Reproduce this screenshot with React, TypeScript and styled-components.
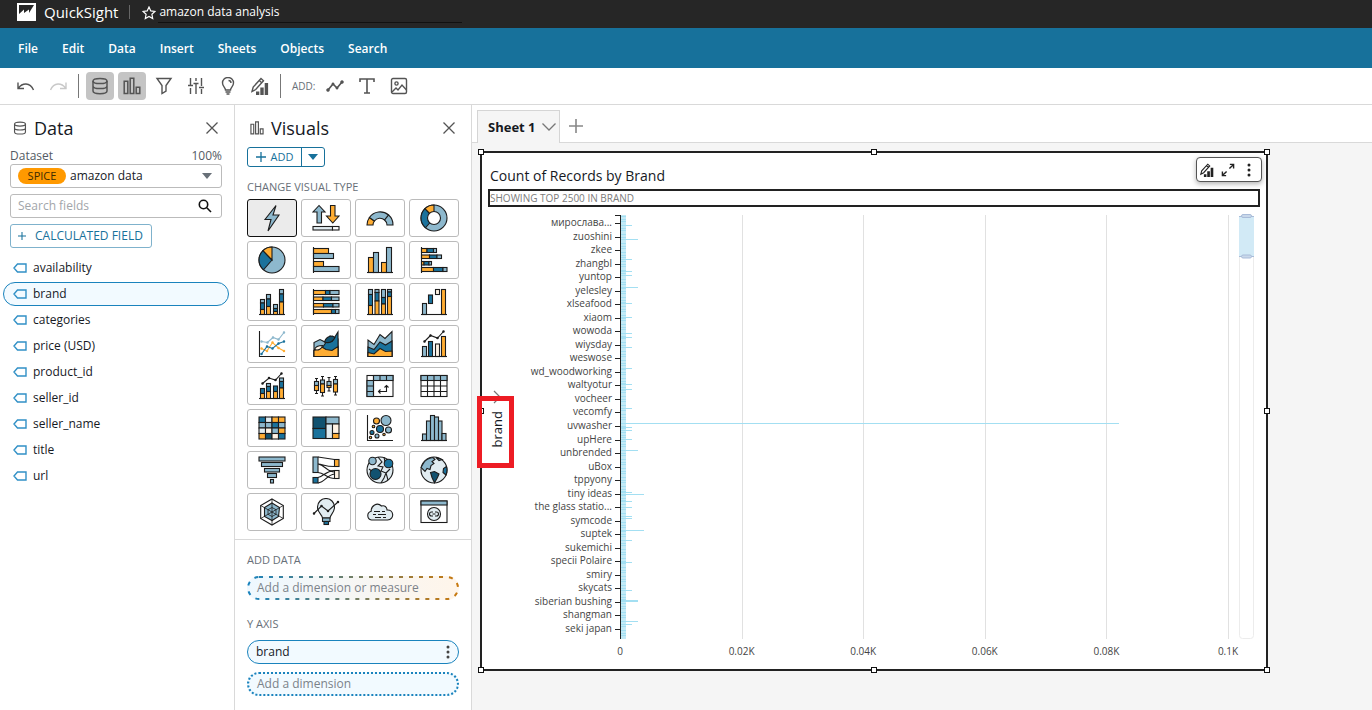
import React from "react";
import styled, { createGlobalStyle } from "styled-components";

const LIGHT = "#8db8cd";
const DARK = "#1a729c";
const NAVY = "#115270";
const ORANGE = "#ffad33";
const PALE = "#e1ecf1";
const CREAM = "#fff3e4";
const INK = "#1c1c1c";

const Global = createGlobalStyle`
  *, *::before, *::after { box-sizing: border-box; }
  body {
    margin: 0;
    background: #fff;
    color: #16191f;
    font-family: "Open Sans", "Noto Sans", sans-serif;
    font-size: 12px;
    line-height: 16px;
  }
  button, input, select { font: inherit; color: inherit; }
  button { cursor: pointer; }
  svg { display: block; flex: none; }
`;

const Page = styled.div`
  min-height: 100vh;
  display: flex;
  flex-direction: column;
`;

const TopBar = styled.header`
  height: 28px;
  padding: 0 17px;
  display: flex;
  align-items: flex-start;
  background: #262626;
  color: #fff;
`;

const Brand = styled.a`
  display: flex;
  gap: 8px;
  padding-top: 3px;
  color: inherit;
  text-decoration: none;
  font-size: 15px;
  line-height: 18px;
`;

const TopDivider = styled.span`
  width: 1px;
  height: 14px;
  margin: 5px 12px 0 11px;
  background: #666;
`;

const StarButton = styled.button`
  margin-top: 6px;
  padding: 0;
  border: 0;
  background: none;
`;

const NameInput = styled.input`
  width: 304px;
  height: 22px;
  margin: 1px 0 0 2px;
  padding: 0 1px;
  border: 0;
  border-bottom: 1px solid #111;
  background: none;
  font-size: 12px;
  font-weight: 500;
  outline: none;
`;

const MenuBar = styled.nav`
  height: 40px;
  padding: 2px 18px 0;
  display: flex;
  align-items: center;
  gap: 24px;
  background: #17719b;
`;

const MenuItem = styled.button`
  padding: 0;
  border: 0;
  background: none;
  color: #fff;
  font-size: 12px;
  font-weight: 600;
`;

const Toolbar = styled.div`
  height: 37px;
  padding: 0 12px 1px;
  display: flex;
  align-items: center;
  gap: 4px;
  border-bottom: 1px solid #d9d9d9;
`;

const ToolButton = styled.button<{ $on?: boolean }>`
  width: 28px;
  height: 28px;
  padding: 0;
  display: grid;
  place-items: center;
  border: 0;
  border-radius: 4px;
  background: ${(p) => (p.$on ? "#c4c4c4" : "none")};
  color: #545454;
  &:disabled { color: #c8c8c8; }
`;

const ToolDivider = styled.span`
  width: 1px;
  height: 24px;
  margin: 0 3px 0 2px;
  background: #777;
`;

const ToolLabel = styled.span`
  width: 25px;
  margin-left: 4px;
  color: #687078;
  font-size: 10px;
`;

const Workspace = styled.div`
  flex: 1;
  display: flex;
  align-items: stretch;
`;

const Panel = styled.aside<{ $width: number; $inset: number }>`
  width: ${(p) => p.$width}px;
  flex: none;
  padding: 11px 12px 13px ${(p) => p.$inset}px;
  border-right: 1px solid #d9d9d9;
`;

const PanelHead = styled.div`
  height: 24px;
  padding: 0 4px 0 3px;
  display: flex;
  align-items: center;
  gap: 7px;
  color: #545454;
`;

const PanelTitle = styled.h2`
  flex: 1;
  margin: 0;
  color: #16191f;
  font-size: 18px;
  font-weight: 400;
  line-height: 22px;
`;

const CloseButton = styled.button`
  padding: 0;
  border: 0;
  background: none;
  color: #545454;
`;

const DatasetHead = styled.div`
  margin-top: 8px;
  display: flex;
  justify-content: space-between;
  color: #545b64;
`;

const Box = styled.div`
  height: 24px;
  margin-bottom: 6px;
  padding: 0 9px 0 7px;
  display: flex;
  align-items: center;
  border: 1px solid #bbb;
  border-radius: 3px;
`;

const Badge = styled.span`
  width: 48px;
  height: 16px;
  flex: none;
  border-radius: 8px;
  background: #ff9900;
  color: #3d2b00;
  font-size: 11px;
  line-height: 15px;
  text-align: center;
`;

const DatasetSelect = styled.select`
  flex: 1;
  min-width: 0;
  height: 22px;
  padding: 0 4px;
  border: 0;
  background: none;
  appearance: none;
  outline: none;
`;

const SearchInput = styled.input`
  flex: 1;
  min-width: 0;
  padding: 0;
  border: 0;
  background: none;
  outline: none;
  &::placeholder { color: #a2a6aa; opacity: 1; }
`;

const OutlineButton = styled.button`
  height: 24px;
  padding: 0 8px 0 7px;
  display: flex;
  align-items: center;
  gap: 9px;
  border: 1px solid #7fb2cc;
  border-radius: 3px;
  background: #fff;
  color: #17719b;
`;

const FieldList = styled.ul`
  margin: 8px -7px 0;
  padding: 0;
  list-style: none;
  display: grid;
  gap: 2px;
`;

const Field = styled.button<{ $on?: boolean }>`
  width: 100%;
  height: 24px;
  padding: 0 9px;
  display: flex;
  align-items: center;
  gap: 6px;
  border: 1px solid ${(p) => (p.$on ? "#1a83bd" : "transparent")};
  border-radius: 12px;
  background: ${(p) => (p.$on ? "#f2faff" : "none")};
`;

const AddGroup = styled.div`
  width: 78px;
  height: 20px;
  margin-top: 7px;
  display: flex;
  border: 1px solid #17719b;
  border-radius: 3px;
  color: #17719b;
`;

const AddButton = styled.button`
  flex: 1;
  padding: 0;
  display: flex;
  align-items: center;
  justify-content: center;
  gap: 5px;
  border: 0;
  background: none;
  font-size: 11px;
`;

const AddMenuButton = styled.button`
  width: 23px;
  padding: 0;
  display: grid;
  place-items: center;
  border: 0;
  border-left: 1px solid #17719b;
  background: none;
`;

const Caption = styled.h3<{ $top: number; $bottom: number }>`
  margin: ${(p) => p.$top}px 0 ${(p) => p.$bottom}px;
  color: #687078;
  font-size: 11px;
  font-weight: 400;
  line-height: 16px;
`;

const VisualGrid = styled.div`
  display: grid;
  grid-template-columns: repeat(4, 50px);
  gap: 4px;
`;

const VisualButton = styled.button<{ $on?: boolean }>`
  height: 38px;
  padding: 0;
  display: grid;
  place-items: center;
  border: 1px solid ${(p) => (p.$on ? "#111" : "#bbb")};
  border-radius: 3px;
  background: ${(p) => (p.$on ? "#ebebeb" : "#fff")};
`;

const Rule = styled.hr`
  height: 1px;
  margin: 8px -12px 0;
  border: 0;
  background: #d9d9d9;
`;

const Well = styled.button<{ $kind: "any" | "filled" | "empty" }>`
  position: relative;
  width: 100%;
  height: 24px;
  margin-bottom: 8px;
  padding: ${(p) => (p.$kind === "any" ? "0 10px" : "0 8px")};
  display: flex;
  align-items: center;
  justify-content: space-between;
  border: ${(p) =>
    p.$kind === "any" ? "0" : p.$kind === "filled" ? "1px solid #1a83bd" : "2px dotted #1a83bd"};
  border-radius: 12px;
  background: ${(p) => (p.$kind === "any" ? "linear-gradient(90deg, #eef8ff, #fff5ea)" : "#f2faff")};
  color: ${(p) => (p.$kind === "filled" ? "#16191f" : "#7b8289")};
`;

const WellOutline = styled.svg`
  position: absolute;
  inset: 0;
  width: 100%;
  height: 100%;
`;

const Main = styled.main`
  flex: 1;
  min-width: 0;
  background: #f5f5f5;
`;

const TabStrip = styled.div`
  height: 38px;
  padding: 5px 5px 0;
  display: flex;
  background: #fff;
  border-bottom: 1px solid #d9d9d9;
`;

const Tab = styled.button`
  width: 83px;
  height: 33px;
  padding: 0 3px 0 10px;
  display: flex;
  align-items: center;
  justify-content: space-between;
  border: 1px solid #d5d5d5;
  border-bottom: 0;
  background: #f5f5f5;
  font-size: 13px;
  font-weight: 700;
`;

const NewTab = styled.button`
  height: 32px;
  padding: 0 9px;
  border: 0;
  background: none;
`;

const Sheet = styled.div`
  padding: 8px 104px 39px 8px;
`;

const Visual = styled.section`
  position: relative;
  padding: 13px 6px 0;
  border: 2px solid #222;
  background: #fff;
`;

const VisualTitle = styled.h1`
  margin: 0 2px 3px;
  font-size: 14px;
  font-weight: 400;
  line-height: 20px;
`;

const Subtitle = styled.div`
  height: 18px;
  border: 2px solid #222;
  color: #7b7b7b;
  font-size: 10px;
  line-height: 14px;
`;

const Handle = styled.span<{ $x: number; $y: number }>`
  position: absolute;
  left: ${(p) => p.$x}%;
  top: ${(p) => p.$y}%;
  width: 6px;
  height: 6px;
  border: 1px solid #111;
  background: #fff;
  transform: translate(-50%, -50%);
`;

const Handles = styled.div`
  position: absolute;
  inset: -1px;
  pointer-events: none;
`;

const FloatBar = styled.div`
  position: absolute;
  top: 4px;
  right: 4px;
  width: 66px;
  height: 25px;
  padding: 0 3px 0 1px;
  display: flex;
  justify-content: space-between;
  border: 1px solid #555;
  border-radius: 4px;
  background: #fff;
  box-shadow: 0 2px 5px rgba(0, 0, 0, 0.3);
`;

const FloatButton = styled.button`
  width: 18px;
  padding: 0;
  display: grid;
  place-items: center;
  border: 0;
  background: none;
  color: #222;
`;

const ChartBody = styled.div`
  margin-top: 8px;
  display: grid;
  grid-template-columns: 18px 114px 1fr 32px;
`;

const AxisTitle = styled.div`
  padding-top: 175px;
`;

const AxisButton = styled.button`
  position: relative;
  width: 18px;
  padding: 0;
  display: flex;
  flex-direction: column;
  align-items: center;
  gap: 7px;
  border: 0;
  background: none;
`;

const AxisText = styled.span`
  writing-mode: vertical-rl;
  transform: rotate(180deg);
  font-size: 13px;
  line-height: 18px;
`;

const Highlight = styled.span`
  position: absolute;
  left: -11px;
  top: 6px;
  width: 37px;
  height: 72px;
  border: 5px solid #ed1c24;
`;

const LabelColumn = styled.svg`
  width: 114px;
  height: 424px;
  overflow: visible;
  fill: #444;
  font-size: 10px;
`;

const Plot = styled.svg`
  width: 100%;
  height: 454px;
  overflow: visible;
  fill: #444;
  font-size: 10px;
`;

const ScrollTrack = styled.svg`
  margin-left: 10px;
  overflow: visible;
`;

/* ---------- interface icons ---------- */

type IconProps = { size?: number; box?: number; width?: number; children: React.ReactNode };

const Line = ({ size = 18, box = 18, width = 1.4, children }: IconProps) => (
  <svg width={size} height={size} viewBox={`0 0 ${box} ${box}`} fill="none" stroke="currentColor" strokeWidth={width}>
    {children}
  </svg>
);

const DbIcon = ({ size = 18, width = 1.5 }: { size?: number; width?: number }) => (
  <Line size={size} width={width}>
    <ellipse cx="9" cy="4" rx="7" ry="2.6" />
    <path d="M2 4v10c0 1.5 3 2.7 7 2.7s7-1.2 7-2.7V4M2 9c0 1.4 3 2.6 7 2.6s7-1.200 7-2.600" />
  </Line>
);

const BarsIcon = ({ size = 18, width = 1.5 }: { size?: number; width?: number }) => (
  <Line size={size} width={width}>
    <path d="M1.200 4.200h3.600v12.300H1.200zM7.200 1.200h3.600v15.300H7.200zM13.200 10.200h3.600v6.300h-3.600z" />
  </Line>
);

const PencilChart = ({ size = 18 }: { size?: number }) => (
  <svg width={size} height={size} viewBox="0 0 18 18">
    <path d="M1 14.500l1.200-4.500L10 1.500l2.500 2.300-7.800 8.700zM8.300 3.500l2.400 2.300M1 14.500l3.700-2" fill="none" stroke="currentColor" strokeWidth="1.400" />
    <path d="M5 14.500h3.300V18H5zM9.300 10.500h3.400V18H9.300zM13.700 6h3.400v12h-3.400z" fill="currentColor" />
  </svg>
);

const CloseIcon = () => (
  <Line size={12} box={12} width={1.3}>
    <path d="M0.500 0.500l11 11M11.500 0.500l-11 11" />
  </Line>
);

const PlusIcon = ({ size = 8 }: { size?: number }) => (
  <Line size={size} box={10} width={1.3}>
    <path d="M5 0v10M0 5h10" />
  </Line>
);

const Caret = ({ color = "#687078" }) => (
  <svg width="10" height="6" viewBox="0 0 10 6">
    <path d="M0 0h10L5 6z" fill={color} />
  </svg>
);

const TagIcon = () => (
  <svg width="14" height="10" viewBox="0 0 14 10" fill="none" stroke="#3190c6" strokeWidth="1.400">
    <path d="M4.500 1H13v8H4.500L1 5z" />
  </svg>
);

const Dots = ({ color = "#444" }) => (
  <svg width="4" height="14" viewBox="0 0 4 14" fill={color}>
    <circle cx="2" cy="2" r="1.500" />
    <circle cx="2" cy="7" r="1.500" />
    <circle cx="2" cy="12" r="1.500" />
  </svg>
);

/* ---------- visual type icons ---------- */

type Rect = [number, number, number, number, string];

const Rects = ({ list }: { list: Rect[] }) => (
  <>
    {list.map(([x1, y1, x2, y2, fill], i) => (
      <rect key={i} x={x1} y={y1} width={x2 - x1} height={y2 - y1} fill={fill} />
    ))}
  </>
);

const columnStack = (x1: number, x2: number, a: number, b: number, c: number): Rect[] => [
  [x1, a, x2, b, LIGHT],
  [x1, b, x2, c, DARK],
  [x1, c, x2, 26.5, ORANGE],
];

const rowStack = (y1: number, y2: number, a: number, b: number, c: number): Rect[] => [
  [1.5, y1, a, y2, ORANGE],
  [a, y1, b, y2, DARK],
  [b, y1, c, y2, LIGHT],
];

const Base = () => <path d="M1 26.500h26" />;
const Side = () => <path d="M1.500 1v26" />;

const Trend = ({ points, color }: { points: [number, number][]; color: string }) => (
  <g stroke={color} fill={color}>
    <polyline points={points.map((p) => p.join(",")).join(" ")} fill="none" />
    {points.map(([x, y]) => (
      <circle key={x} cx={x} cy={y} r="0.700" />
    ))}
  </g>
);

const heat = [
  [DARK, PALE, ORANGE, ORANGE],
  [LIGHT, LIGHT, DARK, LIGHT],
  [PALE, CREAM, LIGHT, ORANGE],
  [ORANGE, NAVY, CREAM, DARK],
];

const visuals: { name: string; art: React.ReactNode }[] = [
  { name: "AutoGraph", art: <path d="M18 1.500L7 15.500h6L10 27 21 11h-6z" fill={LIGHT} /> },
  {
    name: "KPI",
    art: (
      <>
        <path d="M7 1.500L1 8h4v11h4.500V8H13z" fill={LIGHT} />
        <path d="M18.500 1.500H23V12h4l-6.200 7-6.300-7h4z" fill={ORANGE} />
        <Rects list={[[1, 22.5, 20.5, 26, PALE], [20.5, 22.5, 27, 26, "#fff"]]} />
      </>
    ),
  },
  {
    name: "Gauge",
    art: (
      <>
        <path d="M1 21a13 13 0 0 1 2.400-7.500l5 3.500A7 7 0 0 0 7 21z" fill={ORANGE} />
        <path d="M3.400 13.500a13 13 0 0 1 19.200-2.500l-4 5a7 7 0 0 0-10.200 1z" fill={LIGHT} />
        <path d="M22.600 11A13 13 0 0 1 27 21h-6a7 7 0 0 0-2.400-5z" fill={LIGHT} />
      </>
    ),
  },
  {
    name: "Donut chart",
    art: (
      <>
        <circle cx="14" cy="14" r="13" fill={LIGHT} />
        <path d="M14 14L5.500 23.800A13 13 0 0 1 5 4.600z" fill={DARK} />
        <path d="M14 14L5 4.600A13 13 0 0 1 14 1z" fill={ORANGE} />
        <circle cx="14" cy="14" r="6.500" fill="#fff" />
      </>
    ),
  },
  {
    name: "Pie chart",
    art: (
      <>
        <circle cx="14" cy="14" r="13" fill={LIGHT} />
        <path d="M14 14L5.500 23.800A13 13 0 0 1 5 4.600z" fill={DARK} />
        <path d="M14 14L5 4.600A13 13 0 0 1 14 1z" fill={ORANGE} />
      </>
    ),
  },
  {
    name: "Horizontal bar chart",
    art: (
      <>
        <Rects list={[[1.5, 2.5, 16.5, 7.5, ORANGE], [1.5, 7.5, 21.5, 12.5, LIGHT], [1.5, 15.5, 11.5, 20.5, ORANGE], [1.5, 20.5, 27, 25.5, LIGHT]]} />
        <Side />
      </>
    ),
  },
  {
    name: "Vertical bar chart",
    art: (
      <>
        <Rects list={[[2.5, 11.5, 7.5, 26.5, ORANGE], [7.5, 6.5, 12.5, 26.5, LIGHT], [15.5, 16.5, 20.5, 26.5, ORANGE], [20.5, 1.5, 25.5, 26.5, LIGHT]]} />
        <Base />
      </>
    ),
  },
  {
    name: "Horizontal stacked bar chart",
    art: (
      <>
        <Rects list={[...rowStack(2.5, 6.5, 7, 13.5, 16.5), ...rowStack(9, 12.5, 9.5, 17, 21.5), ...rowStack(15.5, 19, 4, 9, 11.5), ...rowStack(21.5, 25.5, 13.5, 23, 27)]} />
        <Side />
      </>
    ),
  },
  {
    name: "Vertical stacked bar chart",
    art: (
      <>
        <Rects list={[...columnStack(2.5, 6.5, 11.5, 15, 21.5), ...columnStack(8.5, 12.5, 6.5, 11, 18.5), ...columnStack(15.5, 19.5, 16.5, 20.5, 23.5), ...columnStack(21.5, 25.5, 1.5, 6, 14)]} />
        <Base />
      </>
    ),
  },
  {
    name: "Horizontal stacked 100% bar chart",
    art: (
      <>
        <Rects list={[...rowStack(2.5, 6.5, 13.5, 18, 27), ...rowStack(9, 12.5, 11, 19.5, 27), ...rowStack(15.5, 19, 11.5, 21, 27), ...rowStack(21.5, 25.5, 19.5, 23.5, 27)]} />
        <Side />
      </>
    ),
  },
  {
    name: "Vertical stacked 100% bar chart",
    art: (
      <>
        <Rects list={[...columnStack(2.5, 6.5, 1.5, 6.5, 17.5), ...columnStack(9, 13, 1.5, 4.5, 13), ...columnStack(15.5, 19.5, 1.5, 9.5, 16), ...columnStack(21.5, 25.5, 1.5, 4, 8.5)]} />
        <Base />
      </>
    ),
  },
  {
    name: "Waterfall chart",
    art: (
      <>
        <Rects list={[[2.5, 15.5, 6.5, 26.5, LIGHT], [8.5, 7, 12.5, 15.5, DARK], [15.5, 1.5, 19.5, 6.5, CREAM], [21.5, 1.5, 25.5, 26.5, ORANGE]]} />
        <Base />
      </>
    ),
  },
  {
    name: "Line chart",
    art: (
      <>
        <path d="M1.500 1v25.500H27" />
        <Trend color={LIGHT} points={[[3.5, 11.5], [9.5, 12.5], [15, 7.5], [20.5, 9.5], [26, 2.5]]} />
        <Trend color={ORANGE} points={[[3.5, 18.5], [9, 21], [14.5, 12.5], [20.5, 18], [26, 21]]} />
        <Trend color={DARK} points={[[3.5, 24], [9, 16.5], [14.5, 18.5], [20.5, 13.5], [26, 11.5]]} />
      </>
    ),
  },
  {
    name: "Area line chart",
    art: (
      <>
        <path d="M2 26.500V12.500l6-3 5 2.500 5-6 8 3v17.500z" fill={LIGHT} />
        <path d="M2 26.500v-6l7-1 5-7 6-1 6-9.500v24.500z" fill={DARK} />
        <path d="M12.500 12c1-3.500 4-6 8-6l2.500 1.500c-2 4-6 6-10.500 4.500z" fill={NAVY} />
        <path d="M2 26.500v-6l7-4 5 3 6 1 6-4v10z" fill={ORANGE} />
        <path d="M2.500 19.500c1-3 4-4 8-4-.5 3-4 5.500-8 4z" fill={CREAM} />
      </>
    ),
  },
  {
    name: "Stacked area line chart",
    art: (
      <>
        <path d="M2 26.500V10l6 4.500 6-10 5 4 7-7v25z" fill={LIGHT} />
        <path d="M2 26.500V17l6 2.500L14 12l5.500 3 6.500-4v15.500z" fill={DARK} />
        <path d="M2 26.500v-4l6 1.500 6-5.500 5.500 3L26 21v5.500z" fill={ORANGE} />
      </>
    ),
  },
  {
    name: "Clustered bar combo chart",
    art: (
      <>
        <Rects list={[[2.5, 16.5, 6.5, 26.5, LIGHT], [8.5, 11.5, 12.5, 26.5, DARK], [15.5, 14, 19.5, 26.5, CREAM], [21.5, 6.5, 25.5, 26.5, ORANGE]]} />
        <Base />
        <Trend color={INK} points={[[4.5, 11.5], [10.5, 5.5], [17.5, 8], [23.5, 1.5]]} />
      </>
    ),
  },
  {
    name: "Stacked bar combo chart",
    art: (
      <>
        <Rects list={[...columnStack(2.5, 6.5, 16.5, 16.5, 21.5), ...columnStack(8.5, 12.5, 11.5, 14.5, 19.5), ...columnStack(15.5, 19.5, 14, 14, 19.5), ...columnStack(21.5, 25.5, 6, 9.5, 16)]} />
        <Base />
        <Trend color={INK} points={[[4.5, 11.5], [11, 6], [17.5, 8], [23.5, 1.5]]} />
      </>
    ),
  },
  {
    name: "Box plot",
    art: (
      <>
        <path d="M4.500 6.500v15M3 6.500h3M3 21.500h3M10.500 4.500v19.500M9 4.500h3M9 24h3M17 5.500V19M15.500 5.500h3M15.500 19h3M23.500 4.500V23M22 4.500h3M22 23h3" />
        <Rects
          list={[
            [2.5, 9.5, 6.5, 13.5, LIGHT], [2.5, 13.5, 6.5, 18.5, ORANGE],
            [8.5, 8, 12.5, 12, LIGHT], [8.5, 12, 12.5, 20.5, ORANGE],
            [15, 9.5, 19, 13.5, LIGHT], [15, 13.5, 19, 15.5, ORANGE],
            [21.5, 7.5, 25.5, 12, LIGHT], [21.5, 12, 25.5, 20, ORANGE],
          ]}
        />
      </>
    ),
  },
  {
    name: "Pivot table",
    art: (
      <>
        <Rects list={[[1, 3.5, 27, 24.5, "#fff"], [7.5, 3.5, 27, 8.5, LIGHT], [1, 8.5, 7.5, 24.5, LIGHT]]} />
        <path d="M7.500 3.500v21M14 3.500v5M20.500 3.500v5M1 14h6.500M1 19.500h6.500M12.500 19.500h8v-6M14.500 17.500l-2 2 2 2M18.500 15.500l2-2 2 2" />
      </>
    ),
  },
  {
    name: "Table",
    art: (
      <>
        <Rects list={[[1, 3.5, 27, 24.5, "#fff"], [1, 3.5, 27, 8.5, LIGHT]]} />
        <path d="M7.500 3.500v21M14 3.500v21M20.500 3.500v21M1 14h26M1 19.500h26" />
      </>
    ),
  },
  {
    name: "Heat map",
    art: <Rects list={heat.flatMap((row, r) => row.map((c, i): Rect => [1 + i * 6.5, 3 + r * 5.5, 7.5 + i * 6.5, 8.5 + r * 5.5, c]))} />,
  },
  {
    name: "Tree map",
    art: (
      <Rects
        list={[
          [1, 3, 14, 14.5, NAVY], [1, 14.5, 14, 24.5, DARK], [14, 3, 27, 10, LIGHT],
          [14, 10, 20.5, 24.5, PALE], [20.5, 10, 27, 19.5, CREAM], [20.5, 19.5, 27, 24.5, ORANGE],
        ]}
      />
    ),
  },
  {
    name: "Scatter plot",
    art: (
      <>
        <path d="M1.500 1v25.500H27" />
        {([[10.5, 7, 3, ORANGE], [20, 6.5, 5, LIGHT], [7.5, 12.5, 1.3, ORANGE], [14, 15, 3.5, DARK], [22.5, 16, 3, LIGHT], [6, 18.5, 2, DARK], [11, 22, 2, LIGHT], [4.5, 23.5, 1.2, ORANGE], [18, 20.5, 1.2, ORANGE]] as [number, number, number, string][]).map(
          ([x, y, r, c]) => <circle key={`${x}-${y}`} cx={x} cy={y} r={r} fill={c} />
        )}
      </>
    ),
  },
  {
    name: "Histogram",
    art: (
      <>
        <Rects list={[[2.5, 20, 6.5, 26.5, LIGHT], [6.5, 7, 10.5, 26.5, LIGHT], [10.5, 1.5, 14.5, 26.5, LIGHT], [14.5, 3, 18.5, 26.5, LIGHT], [18.5, 7, 22, 26.5, LIGHT], [22, 19.5, 26, 26.5, LIGHT]]} />
        <Base />
      </>
    ),
  },
  {
    name: "Funnel chart",
    art: (
      <Rects list={[[1, 1, 27, 5, LIGHT], [3.5, 6.5, 24.5, 10.5, LIGHT], [6.5, 12.5, 21.5, 16, LIGHT], [9.5, 17.5, 18.5, 21.5, LIGHT], [12.5, 23.5, 15.5, 27, LIGHT]]} />
    ),
  },
  {
    name: "Sankey diagram",
    art: (
      <>
        <path d="M6 1l16.500 2.500M6 8c5 0 6 2.500 16.500 2.500M6 8c7 1 9 8 16.500 8M6 16.500c6 0 9 6 16.500 6M6 21.500c6-1 7-6.500 16.500-7M6 27c7-1 9-8 16.500-9" fill="none" />
        <Rects list={[[1, 1, 6, 16.5, LIGHT], [1, 21.5, 6, 27, DARK], [22.5, 3.5, 27, 10.5, ORANGE], [22.5, 14.5, 27, 22.5, CREAM]]} />
      </>
    ),
  },
  {
    name: "Points on map",
    art: (
      <>
        <circle cx="14" cy="14" r="13" fill={PALE} />
        <path d="M12 1l4 5-4 4 5 1-2 4 5 2-2 5-3 5M18 1l1 5 5 2M24 13l-4 4 2 7M3 13l4 3" fill="none" />
        <circle cx="6.500" cy="5" r="3.700" fill={LIGHT} />
        <circle cx="22.500" cy="7.500" r="4.300" fill={DARK} />
        <circle cx="9.500" cy="18" r="5.500" fill={NAVY} />
      </>
    ),
  },
  {
    name: "Filled map",
    art: (
      <>
        <circle cx="14" cy="14" r="13" fill={PALE} />
        <path d="M3 8C5 4 9 2 13 1.500l2 2-3 2 2 2-3 2-1 4-3-1-2 3-4-4z" fill={LIGHT} />
        <path d="M16 1.500l3 3 3-1z" fill={LIGHT} />
        <path d="M10.500 16.500l4-1 4.500 2.500-1.500 3.500-3 5.200-2.500-5.200z" fill={NAVY} />
        <path d="M26.500 10.500l-3 2-.5 4 3 2.500a13 13 0 0 0 .5-8.500z" fill={DARK} />
      </>
    ),
  },
  {
    name: "Radar chart",
    art: (
      <>
        <path d="M14 1l11.300 6.500v13L14 27 2.700 20.500v-13z" fill="none" />
        <path d="M14 5l7.500 4.500-1 9L14 22.500l-7.500-4v-9z" fill={LIGHT} />
        <path d="M14 1v26M2.700 7.500l22.600 13M25.300 7.500l-22.600 13M14 9.500l4 2.200v4.600l-4 2.200-4-2.200v-4.600z" fill="none" strokeWidth="0.800" />
      </>
    ),
  },
  {
    name: "Insights",
    art: (
      <>
        <path d="M10.500 20c0-3-5-5-5-11a8.500 8.500 0 0 1 17 0c0 6-4.500 8-4.500 11z" fill={PALE} />
        <Rects list={[[10.5, 20, 18, 23.5, LIGHT], [12, 23.5, 16.5, 26.5, DARK]]} />
        <Trend color={INK} points={[[2, 15.5], [9.5, 8], [16, 13], [26, 4]]} />
      </>
    ),
  },
  {
    name: "Word cloud",
    art: (
      <>
        <path d="M5.500 22a4.500 4.500 0 0 1-.3-8.800C5 8 11 3.500 15.500 8c3-1 5.500 1 5.500 4 7-.5 8 9.500.5 10z" fill={PALE} />
        <path d="M8 13.500h6M16 13.500h3M7 16.500h3M12 16.500h8M9 19.500h6M17 19.500h3" />
      </>
    ),
  },
  {
    name: "Custom visual content",
    art: (
      <>
        <Rects list={[[1, 3, 27, 24.5, "#fff"], [1, 3, 27, 7, LIGHT]]} />
        <circle cx="14" cy="16" r="6.500" fill={PALE} />
        <path d="M13 18h-1.500a2 2 0 0 1 0-4H13M15 14h1.500a2 2 0 0 1 0 4H15M12.500 16h3" fill="none" />
      </>
    ),
  },
];

/* ---------- chart data ---------- */

const brands = [
  "мирослава...", "zuoshini", "zkee", "zhangbl", "yuntop", "yelesley", "xlseafood", "xiaom", "wowoda", "wiysday",
  "weswose", "wd_woodworking", "waltyotur", "vocheer", "vecomfy", "uvwasher", "upHere", "unbrended", "uBox", "tppyony",
  "tiny ideas", "the glass statio...", "symcode", "suptek", "sukemichi", "specii Polaire", "smiry", "skycats",
  "siberian bushing", "shangman", "seki japan",
];

// [offset from the top of the plot, records]
const peaks: [number, number][] = [
  [10, 2], [24, 3], [44, 2], [56, 2], [60, 2], [72, 3], [88, 2], [102, 2], [118, 2], [122, 2], [132, 2], [153, 2],
  [169, 2], [174, 2], [193, 2], [208, 82], [212, 2], [215, 2], [224, 2], [235, 3], [277, 2], [279, 4], [286, 2], [292, 2],
  [301, 2], [303, 2], [315, 4], [325, 2], [347, 2], [375, 2], [385, 3], [386, 3], [406, 3], [409, 2],
];

const ticks = ["0", "0.02K", "0.04K", "0.06K", "0.08K", "0.1K"];
const fields = ["availability", "brand", "categories", "price (USD)", "product_id", "seller_id", "seller_name", "title", "url"];
const menus = ["File", "Edit", "Data", "Insert", "Sheets", "Objects", "Search"];
const corners: [number, number][] = [[0, 0], [50, 0], [100, 0], [0, 50], [100, 50], [0, 100], [50, 100], [100, 100]];

const BrandChart = () => (
  <ChartBody>
    <AxisTitle>
      <AxisButton aria-label="brand axis">
        <svg width="8" height="14" viewBox="0 0 8 14" fill="none" stroke="#777" strokeWidth="1.200">
          <path d="M1 1l6 6-6 6" />
        </svg>
        <AxisText>brand</AxisText>
        <Highlight />
      </AxisButton>
    </AxisTitle>
    <LabelColumn>
      <rect x="109" y="0" width="5" height="1" fill="#222" />
      {brands.map((name, i) => {
        const y = Math.round(8 + (i * 406) / 30);
        return (
          <g key={name}>
            <text x="106" y={y + 3} textAnchor="end">{name}</text>
            <rect x="109" y={y} width="5" height="1" fill="#222" />
          </g>
        );
      })}
    </LabelColumn>
    <Plot>
      <defs>
        <pattern id="records" width="6" height="9" patternUnits="userSpaceOnUse">
          <rect width="6" height="9" fill="#c3eaf6" />
          <rect y="1" width="6" height="1" fill="#a3dff2" />
          <rect y="4" width="6" height="1" fill="#a3dff2" />
          <rect y="6" width="6" height="1" fill="#a3dff2" />
        </pattern>
      </defs>
      {ticks.map((t, i) => (
        <g key={t}>
          {i > 0 && <rect x={`${i * 20}%`} y="0" width="1" height="424" fill="#e1e1e1" shapeRendering="crispEdges" />}
          <text x={`${i * 20}%`} y="440" textAnchor="middle">{t}</text>
        </g>
      ))}
      <rect x="1" y="0" width="5" height="424" fill="url(#records)" />
      {peaks.map(([y, n]) => (
        <rect key={y} x="0" y={y} width={`${n}%`} height="1" fill="#a3dff2" shapeRendering="crispEdges" />
      ))}
      <rect x="0" y="0" width="1" height="424" fill="#222" />
    </Plot>
    <ScrollTrack width="16" height="424" viewBox="0 0 16 424">
      <rect x="1.500" y="0.500" width="14" height="423" rx="3" fill="#fff" stroke="#ececec" />
      <rect x="1" y="1" width="15" height="41" fill="#d2eaf6" />
      <path d="M1 1.500h15M1 41.500h15" stroke="#a9bcd9" />
      <rect x="3.500" y="-0.500" width="10" height="3" rx="1.500" fill="#c9d8ea" stroke="#a9bcd9" />
      <rect x="3.500" y="40" width="10" height="3" rx="1.500" fill="#c9d8ea" stroke="#a9bcd9" />
    </ScrollTrack>
  </ChartBody>
);

export default function App() {
  return (
    <Page>
      <Global />
      <TopBar>
        <Brand href="#">
          <svg width="19" height="18" viewBox="0 0 19 18">
            <rect width="19" height="18" fill="#fff" />
            <path d="M2 2h15l-5 8V6.500L7 10V6.500L2 11z" fill="#262626" />
          </svg>
          QuickSight
        </Brand>
        <TopDivider />
        <StarButton aria-label="Favorite">
          <Line size={14} box={14} width={1.2}>
            <path d="M7 1l1.800 3.900 4.200.5-3.100 2.900.8 4.200L7 10.400l-3.700 2.100.8-4.200L1 5.400l4.200-.5z" />
          </Line>
        </StarButton>
        <NameInput aria-label="Analysis name" defaultValue="amazon data analysis" />
      </TopBar>

      <MenuBar>
        {menus.map((m) => (
          <MenuItem key={m}>{m}</MenuItem>
        ))}
      </MenuBar>

      <Toolbar>
        <ToolButton aria-label="Undo">
          <Line><path d="M1 5.500v6h6M1.500 11C5 6 13 4.500 16.500 13" /></Line>
        </ToolButton>
        <ToolButton aria-label="Redo" disabled>
          <Line><path d="M17 5.500v6h-6M16.500 11C13 6 5 4.500 1.500 13" /></Line>
        </ToolButton>
        <ToolDivider />
        <ToolButton aria-label="Data" $on><DbIcon /></ToolButton>
        <ToolButton aria-label="Visuals" $on><BarsIcon /></ToolButton>
        <ToolButton aria-label="Filter">
          <Line><path d="M2 1.500h14L11 8.500v5.500l-4 2.500v-8z" /></Line>
        </ToolButton>
        <ToolButton aria-label="Parameters">
          <Line><path d="M3.500 1v7M3.500 11v6M1 8.500h5M9 1v3M9 7v10M6.500 6.500h5M14.500 1v8M14.500 12v5M12 10.500h5" /></Line>
        </ToolButton>
        <ToolButton aria-label="Insights">
          <Line>
            <path d="M6.500 13c0-2.500-3-3.500-3-7A5.500 5.500 0 0 1 14.500 6c0 3.500-3 4.500-3 7zM6.500 15h5M7.500 17h3M9.500 3.500c1.500 0 2.500 1 2.500 2.500" />
          </Line>
        </ToolButton>
        <ToolButton aria-label="Themes"><PencilChart /></ToolButton>
        <ToolDivider />
        <ToolLabel>ADD:</ToolLabel>
        <ToolButton aria-label="Add visual">
          <Line width={1.6}>
            <path d="M2 13l5-6 4 4 5-6" />
            <g fill="currentColor" strokeWidth="0.500"><circle cx="2" cy="13" r="1.500" /><circle cx="7" cy="7" r="1.200" /><circle cx="11" cy="11" r="1.200" /><circle cx="16" cy="5" r="1.500" /></g>
          </Line>
        </ToolButton>
        <ToolButton aria-label="Add text">
          <Line width={1.6}><path d="M2 5V2h14v3M9 2v14M6 16h6" /></Line>
        </ToolButton>
        <ToolButton aria-label="Add image">
          <Line>
            <rect x="1.500" y="1.500" width="15" height="15" rx="1.500" />
            <circle cx="6.500" cy="6.500" r="1.600" />
            <path d="M2 15l4-4 2 2 4-5 4.500 5" />
          </Line>
        </ToolButton>
      </Toolbar>

      <Workspace>
        <Panel $width={235} $inset={10}>
          <PanelHead>
            <DbIcon size={14} />
            <PanelTitle>Data</PanelTitle>
            <CloseButton aria-label="Close data"><CloseIcon /></CloseButton>
          </PanelHead>
          <DatasetHead>
            <label htmlFor="dataset">Dataset</label>
            <span>100%</span>
          </DatasetHead>
          <Box>
            <Badge>SPICE</Badge>
            <DatasetSelect id="dataset"><option>amazon data</option></DatasetSelect>
            <Caret />
          </Box>
          <Box>
            <SearchInput aria-label="Search fields" placeholder="Search fields" />
            <svg width="14" height="14" viewBox="0 0 14 14" fill="none" stroke="#111" strokeWidth="1.600">
              <circle cx="5.500" cy="5.500" r="4.200" />
              <path d="M8.800 8.800l4.200 4.200" />
            </svg>
          </Box>
          <OutlineButton><PlusIcon />CALCULATED FIELD</OutlineButton>
          <FieldList>
            {fields.map((f) => (
              <li key={f}>
                <Field $on={f === "brand"}><TagIcon />{f}</Field>
              </li>
            ))}
          </FieldList>
        </Panel>

        <Panel $width={237} $inset={12}>
          <PanelHead>
            <BarsIcon size={14} />
            <PanelTitle>Visuals</PanelTitle>
            <CloseButton aria-label="Close visuals"><CloseIcon /></CloseButton>
          </PanelHead>
          <AddGroup>
            <AddButton><PlusIcon size={10} />ADD</AddButton>
            <AddMenuButton aria-label="Add options"><Caret color="#17719b" /></AddMenuButton>
          </AddGroup>
          <Caption $top={12} $bottom={4}>CHANGE VISUAL TYPE</Caption>
          <VisualGrid>
            {visuals.map((v, i) => (
              <VisualButton key={v.name} aria-label={v.name} $on={i === 0}>
                <svg width="28" height="28" viewBox="0 0 28 28" fill="none" stroke={INK} strokeWidth="1.100">
                  {v.art}
                </svg>
              </VisualButton>
            ))}
          </VisualGrid>
          <Rule />
          <Caption $top={12} $bottom={8}>ADD DATA</Caption>
          <Well $kind="any">
            Add a dimension or measure
            <WellOutline>
              <defs>
                <linearGradient id="well" x1="0" x2="1">
                  <stop offset="0" stopColor="#1a83bd" />
                  <stop offset="1" stopColor="#c8790f" />
                </linearGradient>
              </defs>
              <rect x="1" y="1" width="210" height="22" rx="11" fill="none" stroke="url(#well)" strokeWidth="2" strokeDasharray="4 6" />
            </WellOutline>
          </Well>
          <Caption $top={16} $bottom={8}>Y AXIS</Caption>
          <Well $kind="filled">brand<Dots /></Well>
          <Well $kind="empty">Add a dimension</Well>
        </Panel>

        <Main>
          <TabStrip>
            <Tab>
              Sheet 1
              <svg width="14" height="8" viewBox="0 0 14 8" fill="none" stroke="#777" strokeWidth="1.300">
                <path d="M0.500 0.500L7 7l6.500-6.500" />
              </svg>
            </Tab>
            <NewTab aria-label="Add sheet">
              <svg width="14" height="14" viewBox="0 0 14 14" stroke="#888" strokeWidth="1.600"><path d="M7 0v14M0 7h14" /></svg>
            </NewTab>
          </TabStrip>
          <Sheet>
            <Visual>
              <VisualTitle>Count of Records by Brand</VisualTitle>
              <Subtitle>SHOWING TOP 2500 IN BRAND</Subtitle>
              <Handles>
                {corners.map(([x, y]) => (
                  <Handle key={`${x}-${y}`} $x={x} $y={y} />
                ))}
              </Handles>
              <BrandChart />
              <FloatBar>
                <FloatButton aria-label="Format visual"><PencilChart size={14} /></FloatButton>
                <FloatButton aria-label="Maximize">
                  <Line size={14} box={15} width={1.5}>
                    <path d="M9.500 1.500h4V6M13.500 1.500L9 6M5.500 13.500h-4V9M1.500 13.500L6 9" />
                  </Line>
                </FloatButton>
                <FloatButton aria-label="More options"><Dots color="#222" /></FloatButton>
              </FloatBar>
            </Visual>
          </Sheet>
        </Main>
      </Workspace>
    </Page>
  );
}
